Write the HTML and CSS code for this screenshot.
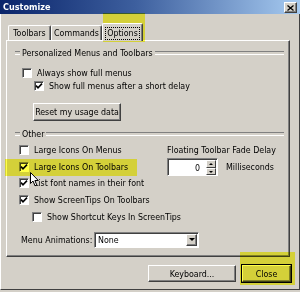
FILE: index.html
```html
<!DOCTYPE html>
<html lang="en">
<head>
    <meta charset="UTF-8">
    <title>Customize</title>
    <link rel="stylesheet" href="styles.css">
</head>
<body>
    <div class="dialog">
        <div class="titlebar">
            <span class="title">Customize</span>
            <span class="title-close">
                <svg width="7" height="6" viewBox="0 0 7 6"><path d="M0.5 0.5 L6.5 5.5 M6.5 0.5 L0.5 5.5" stroke="#000" stroke-width="1.3"/></svg>
            </span>
        </div>
        <div class="frame">
            <div class="tabs">
                <div class="tab tab-toolbars">Toolbars</div>
                <div class="tab tab-commands">Commands</div>
                <div class="tab active"><span class="focus">Options</span></div>
            </div>
            <div class="panel">
                <div class="group-title"><span>Personalized Menus and Toolbars</span></div>
                <div class="check cb-always">
                    <span class="box"></span>
                    <span>Always show full menus</span>
                </div>
                <div class="check cb-delay">
                    <span class="box"><svg width="8" height="8" viewBox="0 0 8 8"><path d="M1 3.6 L3 5.8 L7 1.6" stroke="#000" stroke-width="1.6" fill="none"/></svg></span>
                    <span>Show full menus after a short delay</span>
                </div>
                <div class="btn btn-reset">Reset my usage data</div>

                <div class="group-title group-other"><span>Other</span></div>
                <div class="other">
                    <div class="other-left">
                        <div class="check">
                            <span class="box"></span>
                            <span>Large Icons On Menus</span>
                        </div>
                        <div class="check">
                            <span class="box"><svg width="8" height="8" viewBox="0 0 8 8"><path d="M1 3.6 L3 5.8 L7 1.6" stroke="#000" stroke-width="1.6" fill="none"/></svg></span>
                            <span>Large Icons On Toolbars</span>
                        </div>
                        <div class="check">
                            <span class="box"><svg width="8" height="8" viewBox="0 0 8 8"><path d="M1 3.6 L3 5.8 L7 1.6" stroke="#000" stroke-width="1.6" fill="none"/></svg></span>
                            <span>List font names in their font</span>
                        </div>
                        <div class="check">
                            <span class="box"><svg width="8" height="8" viewBox="0 0 8 8"><path d="M1 3.6 L3 5.8 L7 1.6" stroke="#000" stroke-width="1.6" fill="none"/></svg></span>
                            <span>Show ScreenTips On Toolbars</span>
                        </div>
                        <div class="check cb-indent">
                            <span class="box"></span>
                            <span>Show Shortcut Keys In ScreenTips</span>
                        </div>
                    </div>
                    <div class="other-right">
                        <div class="fade-label">Floating Toolbar Fade Delay</div>
                        <div class="fade-row">
                            <div class="spin">
                                <span class="spin-value">0</span>
                                <span class="spin-btns">
                                    <span class="spin-up"></span>
                                    <span class="spin-down"></span>
                                </span>
                            </div>
                            <span>Milliseconds</span>
                        </div>
                    </div>
                </div>
                <div class="menu-row">
                    <span class="menu-label">Menu Animations:</span>
                    <div class="select">
                        <span class="select-value">None</span>
                        <span class="select-arrow"></span>
                    </div>
                </div>
            </div>
            <div class="buttons">
                <div class="btn btn-keyboard">Keyboard...</div>
                <div class="btn btn-close">Close</div>
            </div>
        </div>

        <!-- highlighter marks drawn over the dialog -->
        <div class="marker marker-tab"></div>
        <div class="marker marker-row"></div>
        <div class="marker marker-close"></div>

        <svg class="cursor" width="10" height="15" viewBox="0 0 10 15">
            <path d="M0.5 0.5 L0.5 11.5 L3 9 L5 13.8 L6.8 13 L4.9 8.5 L8.3 8.5 Z" fill="#fff" stroke="#000" stroke-width="1"/>
        </svg>
    </div>
</body>
</html>
```

FILE: styles.css
```css
* {
    box-sizing: border-box;
}
html, body {
    margin: 0;
    padding: 0;
}
body {
    width: 300px;
    height: 292px;
    overflow: hidden;
    background: #d4d0c8;
    font-family: "DejaVu Sans Condensed", "DejaVu Sans", sans-serif;
    font-size: 8.8px;
    color: #000;
    white-space: nowrap;
}
.dialog {
    position: relative;
    width: 300px;
    height: 292px;
}

/* title bar */
.titlebar {
    height: 14px;
    display: flex;
    justify-content: space-between;
    padding: 0 3px 0 3px;
    background: linear-gradient(90deg, #0a246a 0%, #3d5f9e 45%, #a6caf0 100%);
}
.title {
    color: #fff;
    font-weight: bold;
    font-size: 9px;
    line-height: 15px;
}
.title-close {
    margin-top: 2px;
    width: 13px;
    height: 11px;
    display: flex;
    align-items: center;
    justify-content: center;
    background: #d4d0c8;
    border: 1px solid;
    border-color: #fff #404040 #404040 #fff;
    box-shadow: inset -1px -1px #808080;
}

/* window body */
.frame {
    height: 276px;
    border-left: 1px solid #fff;
    border-right: 1px solid #404040;
    border-bottom: 1px solid #404040;
    padding: 9px 8px 0 5px;
}

/* tabs */
.tabs {
    display: flex;
    align-items: flex-end;
    height: 17px;
    margin-left: 2px;
    position: relative;
    z-index: 1;
}
.tab {
    height: 15px;
    border: 1px solid;
    border-color: #fff #404040 transparent #fff;
    border-bottom: none;
    border-radius: 2px 2px 0 0;
    box-shadow: inset -1px 0 #808080;
    text-align: center;
    line-height: 15px;
}
.tab-toolbars {
    width: 43px;
}
.tab-commands {
    width: 51px;
}
.tab.active {
    width: 41px;
    height: 18px;
    margin-bottom: -1px;
    background: #d4d0c8;
    line-height: 14px;
    padding-top: 2px;
}
.focus {
    display: inline-block;
    padding: 0 1px;
    line-height: 11px;
    outline: 1px dotted #000;
}

/* tab page */
.panel {
    width: 284px;
    height: 217px;
    border: 1px solid;
    border-color: #fff #404040 #404040 #fff;
    box-shadow: inset -1px -1px #808080;
    padding: 6px 5px 0 8px;
}
.group-title {
    display: flex;
    align-items: center;
    height: 12px;
}
.group-title::before,
.group-title::after {
    content: "";
    height: 2px;
    border-top: 1px solid #808080;
    border-bottom: 1px solid #fff;
}
.group-title::before {
    width: 5px;
}
.group-title::after {
    flex: 1;
}
.group-title span {
    padding: 0 2px;
}
.group-other {
    margin-top: 7px;
}

.check {
    display: flex;
    align-items: center;
    gap: 5px;
    height: 13px;
}
.box {
    width: 10px;
    height: 10px;
    flex: none;
    display: flex;
    align-items: center;
    justify-content: center;
    background: #fff;
    border: 1px solid;
    border-color: #808080 #fff #fff #808080;
    box-shadow: inset 1px 1px #404040;
}
.cb-always {
    margin: 7px 0 0 7px;
}
.cb-delay {
    margin-left: 19px;
}

.btn {
    height: 17px;
    display: flex;
    align-items: center;
    justify-content: center;
    background: #d4d0c8;
    border: 1px solid;
    border-color: #fff #404040 #404040 #fff;
    box-shadow: inset -1px -1px #808080;
}
.btn-reset {
    width: 88px;
    height: 18px;
    margin: 11px 0 0 18px;
}

.other {
    display: grid;
    grid-template-columns: 152px 1fr;
    margin-top: 1.7px;
}
.other-left {
    padding-left: 4px;
}
.other-left .check {
    height: 16.7px;
}
.cb-indent {
    margin-left: 13px;
}
.fade-label {
    height: 16.7px;
    line-height: 16.7px;
}
.fade-row {
    display: flex;
    align-items: center;
    gap: 8px;
}
.spin {
    width: 51px;
    height: 18px;
    display: flex;
    background: #fff;
    border: 1px solid;
    border-color: #808080 #fff #fff #808080;
    box-shadow: inset 1px 1px #404040;
    padding: 1px 1px 0 1px;
}
.spin-value {
    flex: 1;
    text-align: right;
    padding-right: 6px;
    line-height: 16px;
}
.spin-btns {
    width: 10px;
    display: flex;
    flex-direction: column;
}
.spin-up,
.spin-down {
    flex: 1;
    display: flex;
    align-items: center;
    justify-content: center;
    background: #d4d0c8;
    border: 1px solid;
    border-color: #fff #404040 #404040 #fff;
}
.spin-up::after,
.spin-down::after {
    content: "";
    border-left: 2px solid transparent;
    border-right: 2px solid transparent;
}
.spin-up::after {
    border-bottom: 2px solid #000;
}
.spin-down::after {
    border-top: 2px solid #000;
}

.menu-row {
    display: flex;
    align-items: center;
    margin: 6.8px 0 0 6px;
}
.menu-label {
    width: 73px;
}
.select {
    width: 105px;
    height: 16px;
    display: flex;
    background: #fff;
    border: 1px solid;
    border-color: #808080 #fff #fff #808080;
    box-shadow: inset 1px 1px #404040;
    padding: 1px;
}
.select-value {
    flex: 1;
    padding-left: 2px;
    line-height: 13px;
}
.select-arrow {
    width: 11px;
    display: flex;
    align-items: center;
    justify-content: center;
    background: #d4d0c8;
    border: 1px solid;
    border-color: #fff #404040 #404040 #fff;
    box-shadow: inset -1px -1px #808080;
}
.select-arrow::after {
    content: "";
    border-left: 3px solid transparent;
    border-right: 3px solid transparent;
    border-top: 3px solid #000;
}

/* bottom buttons */
.buttons {
    display: flex;
    justify-content: flex-end;
    gap: 6px;
    margin-top: 8px;
}
.btn-keyboard {
    width: 88px;
}
.btn-close {
    width: 49px;
    outline: 1px solid #000;
    outline-offset: 0;
}

/* yellow highlighter */
.marker {
    position: absolute;
    background: #ffff48;
    mix-blend-mode: multiply;
}
.marker-tab {
    left: 103px;
    top: 13px;
    width: 42px;
    height: 29px;
}
.marker-row {
    left: 5px;
    top: 159px;
    width: 132px;
    height: 17px;
}
.marker-close {
    left: 240px;
    top: 252px;
    width: 55px;
    height: 33px;
}
.cursor {
    position: absolute;
    left: 30px;
    top: 172px;
}
```
